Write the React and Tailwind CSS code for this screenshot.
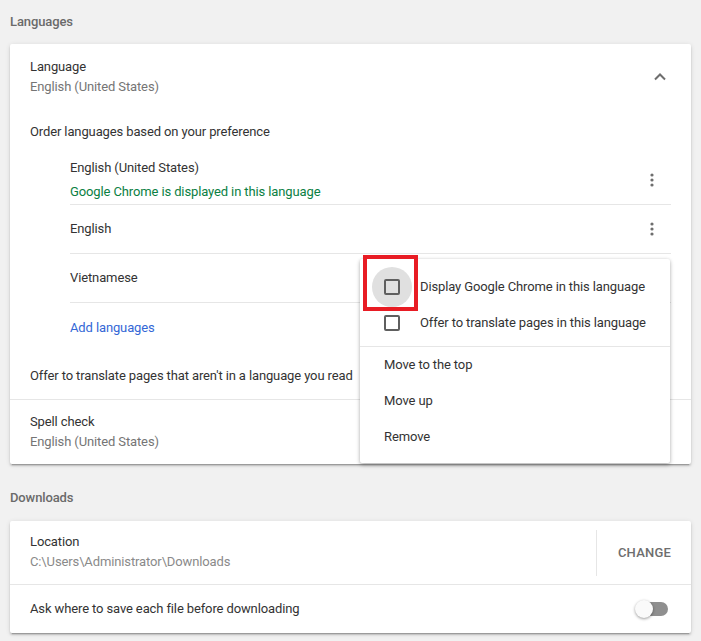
import { useState } from "react";

const cardShadow =
  "shadow-[0_2px_2px_0_rgba(0,0,0,0.14),0_1px_5px_0_rgba(0,0,0,0.12),0_3px_1px_-2px_rgba(0,0,0,0.2)]";

function Dots() {
  return (
    <svg width="4" height="14" viewBox="0 0 4 14" className="text-[#6e6e6e]">
      <circle cx="2" cy="2" r="1.6" fill="currentColor" />
      <circle cx="2" cy="7" r="1.6" fill="currentColor" />
      <circle cx="2" cy="12" r="1.6" fill="currentColor" />
    </svg>
  );
}

function Toggle() {
  return (
    <div className="relative h-[20px] w-[34px]">
      <div className="absolute left-[6px] top-[3px] h-[14px] w-[27px] rounded-full bg-[#8f8f8f]" />
      <div className="absolute left-0 top-[1px] h-[18px] w-[18px] rounded-full bg-[#fafafa] shadow-[0_1px_3px_rgba(0,0,0,0.4)]" />
    </div>
  );
}

function Checkbox() {
  return <div className="h-[16px] w-[16px] rounded-[2px] border-2 border-[#5f5f5f]" />;
}

export default function App() {
  const [languages] = useState(["English", "Vietnamese"]);

  return (
    <div className="relative h-[641px] w-[701px] overflow-hidden bg-[#f1f1f1] px-[10px] font-['Roboto',sans-serif] text-[13px] tracking-[-0.12px] text-[#333]">
      <div className="pt-[14px] text-[13px] leading-[16px] font-medium text-[#6a6a6a]">Languages</div>

      <div className={`mt-[14px] rounded-[2px] bg-white ${cardShadow}`}>
        <div className="flex items-start justify-between pl-[20px] pr-[24px] pt-[13px]">
          <div className="leading-[20px]">
            <div>Language</div>
            <div className="text-[#757575]">English (United States)</div>
          </div>
          <svg width="14" height="9" viewBox="0 0 14 9" className="mt-[15px]">
            <polyline points="2,7.5 7,2.5 12,7.5" fill="none" stroke="#6e6e6e" strokeWidth="2" />
          </svg>
        </div>

        <div className="pl-[20px] pt-[25px] leading-[20px]">Order languages based on your preference</div>

        <div className="ml-[60px] mr-[20px]">
          <div className="flex items-center justify-between border-b border-[#e6e6e6] pb-[2px] pt-[16px]">
            <div className="leading-[20px]">
              <div>English (United States)</div>
              <div className="mt-[4px] text-[#0b8043]">Google Chrome is displayed in this language</div>
            </div>
            <div className="mr-[17px]">
              <Dots />
            </div>
          </div>
          {languages.map((lang) => (
            <div key={lang} className="flex h-[49px] items-center justify-between border-b border-[#e6e6e6]">
              <span>{lang}</span>
              <div className="mr-[17px]">
                <Dots />
              </div>
            </div>
          ))}
          <div className="flex h-[49px] items-center text-[#3367d6]">Add languages</div>
        </div>

        <div className="flex h-[48px] items-center justify-between border-b border-[#e6e6e6] pl-[20px] pr-[22px]">
          <span>Offer to translate pages that aren't in a language you read</span>
          <Toggle />
        </div>

        <div className="pb-[12px] pl-[20px] pt-[12px] leading-[20px]">
          <div>Spell check</div>
          <div className="text-[#757575]">English (United States)</div>
        </div>
      </div>

      <div className="mt-[26px] text-[13px] leading-[16px] font-medium text-[#6a6a6a]">Downloads</div>

      <div className={`mt-[15px] rounded-[2px] bg-white ${cardShadow}`}>
        <div className="flex items-center justify-between border-b border-[#e6e6e6]">
          <div className="pb-[12px] pl-[20px] pt-[11px] leading-[20px]">
            <div>Location</div>
            <div className="text-[#8a8a8a]">C:\Users\Administrator\Downloads</div>
          </div>
          <div className="flex h-[46px] items-center border-l border-[#e6e6e6] pl-[21px] pr-[20px]">
            <span className="font-medium tracking-[0.2px] text-[#6e6e6e]">CHANGE</span>
          </div>
        </div>
        <div className="flex h-[48px] items-center justify-between pl-[20px] pr-[22px]">
          <span>Ask where to save each file before downloading</span>
          <Toggle />
        </div>
      </div>

      {/* language action menu */}
      <div className="absolute left-[360px] top-[259px] w-[310px] rounded-[2px] bg-white pb-[8px] pt-[10px] shadow-[0_2px_4px_rgba(0,0,0,0.25),0_0_3px_rgba(0,0,0,0.12)]">
        <div className="flex h-[36px] items-center pl-[24px]">
          <div className="relative flex h-[16px] w-[16px] items-center justify-center">
            <div className="absolute left-[-12px] top-[-12px] h-[40px] w-[40px] rounded-full bg-[#e0e0e0]" />
            <div className="relative">
              <Checkbox />
            </div>
          </div>
          <span className="ml-[20px]">Display Google Chrome in this language</span>
        </div>
        <div className="flex h-[36px] items-center pl-[24px]">
          <Checkbox />
          <span className="ml-[20px]">Offer to translate pages in this language</span>
        </div>
        <div className="mt-[5px] border-t border-[#e6e6e6]" />
        {["Move to the top", "Move up", "Remove"].map((item) => (
          <div key={item} className="flex h-[36px] items-center pl-[24px]">
            {item}
          </div>
        ))}
      </div>

      {/* highlight box */}
      <div className="absolute left-[363px] top-[255px] h-[56px] w-[55px] border-4 border-[#e81c24]" />
    </div>
  );
}
